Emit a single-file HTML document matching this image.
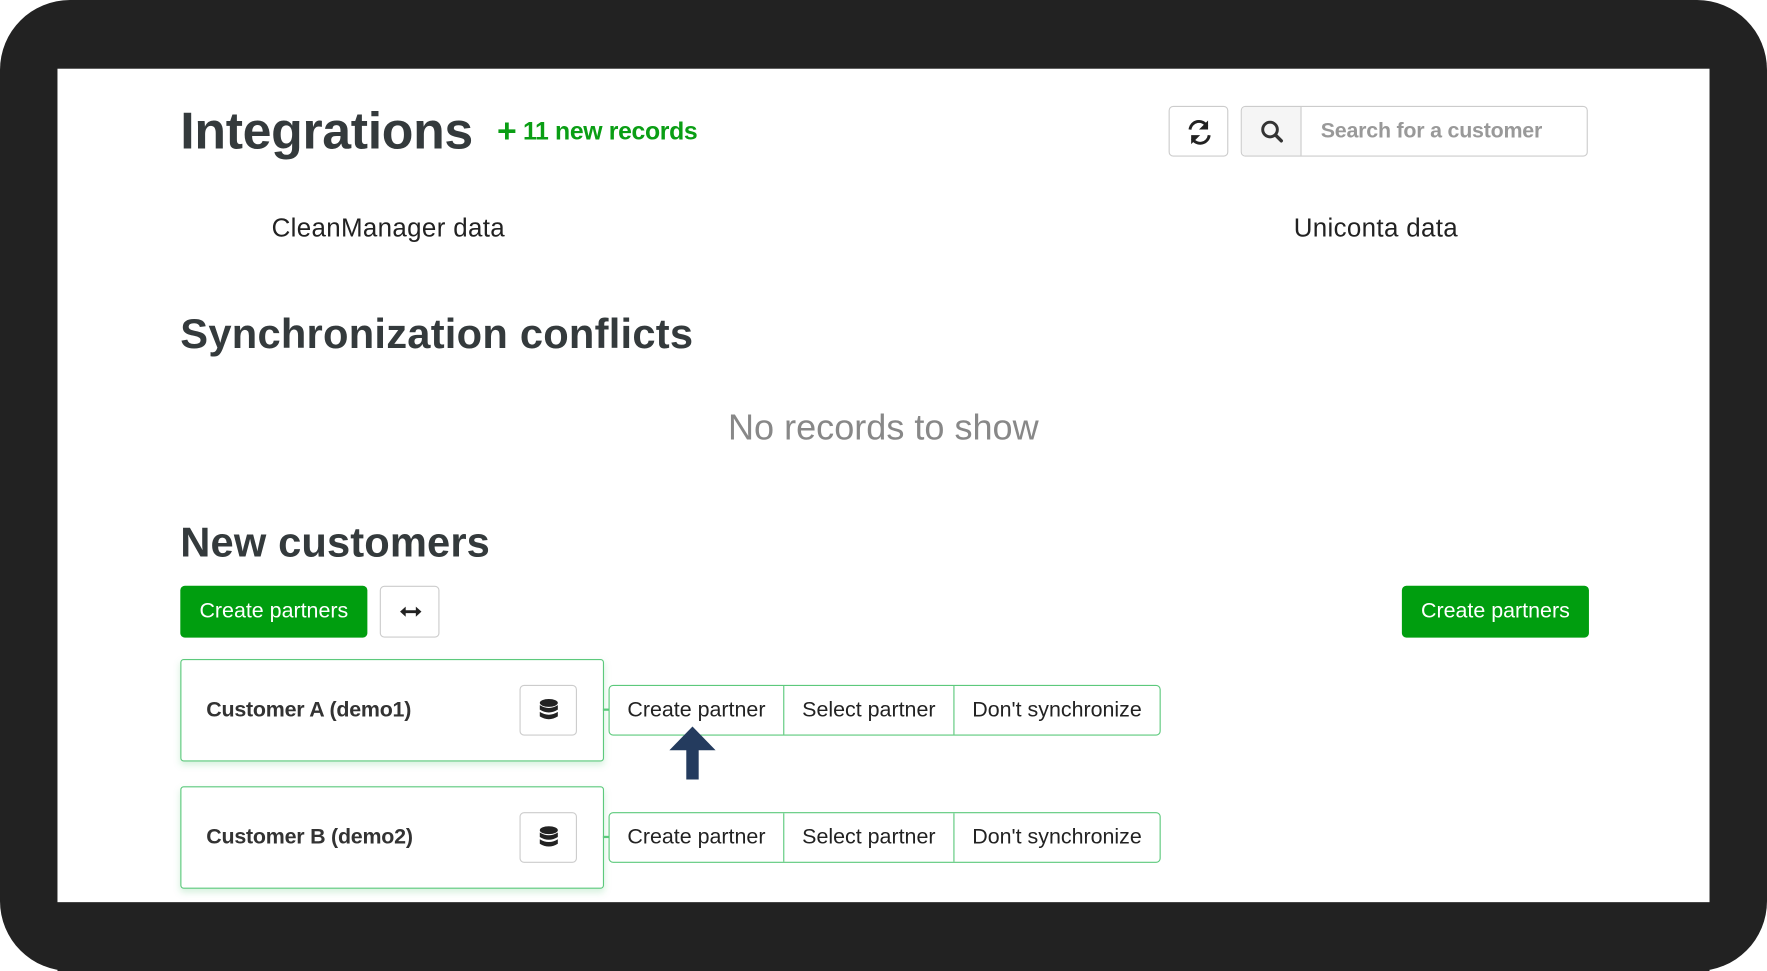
<!DOCTYPE html>
<html><head><meta charset="utf-8"><style>
html,body{margin:0;padding:0;background:#fff;width:1767px;height:971px;overflow:hidden}
#w{position:absolute;left:0;top:0;width:1568px;height:862px;transform:scale(1.12691,1.12645);transform-origin:0 0;font-family:"Liberation Sans",Arial,sans-serif}
.frame{position:absolute;left:0;top:0;width:1568px;height:862px;background:#222;border-radius:62px}
.page{position:absolute;left:51px;top:61px;width:1466px;height:740px;background:#fff}
.a{position:absolute;white-space:nowrap}
.h{color:#343a3c;font-weight:bold}
.btn{position:absolute;box-sizing:border-box;border:1px solid #ccc;border-radius:4px;background:#fff}
.g{position:absolute;box-sizing:border-box;background:#009e0f;color:#fff;border-radius:4px;font-size:19px;display:flex;align-items:center;justify-content:center}
.card{position:absolute;box-sizing:border-box;border:1.5px solid #5cc97c;border-radius:3px;background:#fff;box-shadow:0 3px 6px rgba(92,201,124,.25)}
.grp{position:absolute;box-sizing:border-box;border:1.5px solid #5cc97c;border-radius:4px;display:flex;font-size:19px;color:#222;background:#fff}
.grp div{display:flex;align-items:center;justify-content:center;box-sizing:border-box}
</style></head><body><div id="w">
<div class="frame"></div>
<div class="page"></div>
<div class="a h" style="left:160px;top:89px;font-size:46px;letter-spacing:-0.3px">Integrations</div>
<div class="a" style="left:441px;top:104px;font-size:22px;color:#0a9e14;font-weight:bold;letter-spacing:-0.3px"><span style="font-size:30px;line-height:22px;position:relative;top:2px">+</span> 11 new records</div>
<div class="btn" style="left:1037px;top:94px;width:53px;height:45px"><svg width="53" height="45" viewBox="0 0 53 45"><g fill="none" stroke="#222" stroke-width="2.6"><path d="M18 20a8 8 0 0 1 15-3"/><path d="M35 25a8 8 0 0 1-15 3"/></g><path d="M34 12v8h-8z" fill="#222"/><path d="M19 33v-8h8z" fill="#222"/></svg></div>
<div class="btn" style="left:1101px;top:94px;width:308px;height:45px;overflow:hidden">
<div style="position:absolute;left:0;top:0;width:52px;height:43px;background:#f5f5f5;border-right:1px solid #ccc"><svg width="52" height="43"><circle cx="25" cy="20" r="6.5" fill="none" stroke="#333" stroke-width="2.6"/><path d="M30 25l5 5" stroke="#333" stroke-width="3" stroke-linecap="round"/></svg></div>
<div class="a" style="left:70px;top:11px;font-size:19px;color:#999;font-weight:bold;letter-spacing:-0.2px">Search for a customer</div></div>
<div class="a" style="left:241px;top:189px;font-size:23px;color:#222;letter-spacing:0.3px">CleanManager data</div>
<div class="a" style="left:1148px;top:189px;font-size:23px;color:#222;letter-spacing:0.3px">Uniconta data</div>
<div class="a h" style="left:160px;top:276px;font-size:37px;letter-spacing:0.2px">Synchronization conflicts</div>
<div class="a" style="left:646px;top:361px;font-size:32px;color:#888">No records to show</div>
<div class="a h" style="left:160px;top:461px;font-size:37px;letter-spacing:0.1px">New customers</div>
<div class="g" style="left:160px;top:520px;width:166px;height:46px">Create partners</div>
<div class="btn" style="left:337px;top:520px;width:53px;height:46px"><svg width="53" height="46"><path d="M20 22h13" stroke="#222" stroke-width="2.5"/><path d="M17 22l5-4.5v9zM36 22l-5-4.5v9z" fill="#222"/></svg></div>
<div class="g" style="left:1244px;top:520px;width:166px;height:46px">Create partners</div>

<div class="card" style="left:160px;top:585px;width:376px;height:91px"></div>
<div class="a" style="left:183px;top:620px;font-size:19px;font-weight:bold;color:#333;letter-spacing:-0.2px">Customer A (demo1)</div>
<div class="btn" style="left:461px;top:608px;width:51px;height:45px"><svg width="51" height="45"><g fill="#222"><ellipse cx="25" cy="15" rx="8" ry="3.5"/><path d="M17 17q8 5 16 0v4q-8 5-16 0z"/><path d="M17 23q8 5 16 0v4q-8 5-16 0z"/></g></svg></div>
<div style="position:absolute;left:535px;top:629px;width:6px;height:2px;background:#5cc97c"></div>
<div class="grp" style="left:540px;top:608px;width:490px;height:45px"><div style="width:155px;border-right:1px solid #5cc97c">Create partner</div><div style="width:151px;border-right:1px solid #5cc97c">Select partner</div><div style="flex:1">Don't synchronize</div></div>
<svg class="a" style="left:592px;top:644px" width="45" height="50"><path d="M22.5 1L43 22H28v26h-11V22H2z" fill="#243b5e"/></svg>

<div class="card" style="left:160px;top:698px;width:376px;height:91px"></div>
<div class="a" style="left:183px;top:733px;font-size:19px;font-weight:bold;color:#333;letter-spacing:-0.2px">Customer B (demo2)</div>
<div class="btn" style="left:461px;top:721px;width:51px;height:45px"><svg width="51" height="45"><g fill="#222"><ellipse cx="25" cy="15" rx="8" ry="3.5"/><path d="M17 17q8 5 16 0v4q-8 5-16 0z"/><path d="M17 23q8 5 16 0v4q-8 5-16 0z"/></g></svg></div>
<div style="position:absolute;left:535px;top:742px;width:6px;height:2px;background:#5cc97c"></div>
<div class="grp" style="left:540px;top:721px;width:490px;height:45px"><div style="width:155px;border-right:1px solid #5cc97c">Create partner</div><div style="width:151px;border-right:1px solid #5cc97c">Select partner</div><div style="flex:1">Don't synchronize</div></div>
<div style="position:absolute;left:51px;top:801px;width:1466px;height:61px;background:#222"></div>
</div></body></html>
